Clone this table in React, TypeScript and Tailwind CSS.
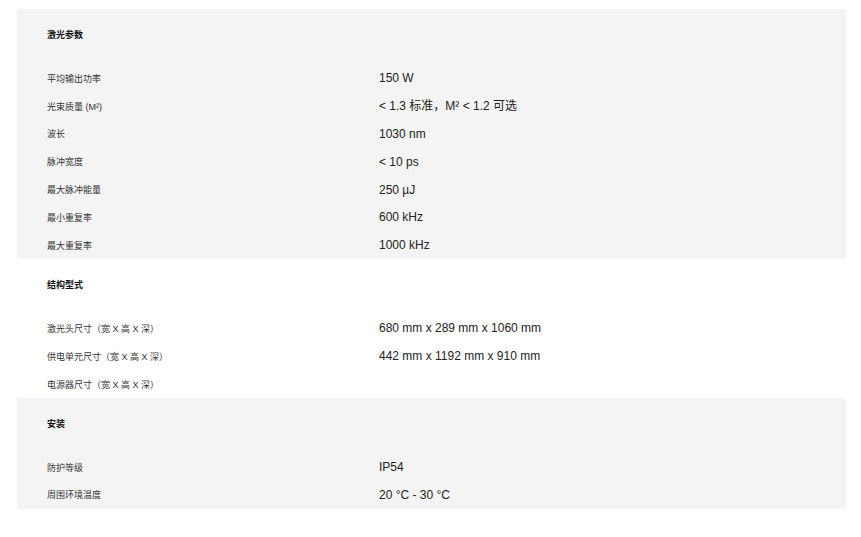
import React from "react";

type Section = { title: string; rows: [string, string][]; gray: boolean };

const sections: Section[] = [
  {
    title: "激光参数",
    gray: true,
    rows: [
      ["平均输出功率", "150 W"],
      ["光束质量 (M²)", "< 1.3 标准，M² < 1.2 可选"],
      ["波长", "1030 nm"],
      ["脉冲宽度", "< 10 ps"],
      ["最大脉冲能量", "250 µJ"],
      ["最小重复率", "600 kHz"],
      ["最大重复率", "1000 kHz"],
    ],
  },
  {
    title: "结构型式",
    gray: false,
    rows: [
      ["激光头尺寸（宽 X 高 X 深）", "680 mm x 289 mm x 1060 mm"],
      ["供电单元尺寸（宽 X 高 X 深）", "442 mm x 1192 mm x 910 mm"],
      ["电源器尺寸（宽 X 高 X 深）", ""],
    ],
  },
  {
    title: "安装",
    gray: true,
    rows: [
      ["防护等级", "IP54"],
      ["周围环境温度", "20 °C - 30 °C"],
    ],
  },
];

export default function App() {
  return (
    <div
      className="w-[861px] h-[537px] bg-white pt-[9px] pl-[17px] text-[#222]"
      style={{ fontFamily: '"Liberation Sans", Arial, "Noto Sans CJK SC", sans-serif' }}
    >
      <div className="w-[829px] flex flex-col">
        {sections.map((s) => (
          <div key={s.title} className={`${s.gray ? "bg-[#f4f4f4]" : "bg-white"} px-[30px] pt-[17px]`}>
            <div className="h-[18px] leading-[18px] text-[9px] font-bold text-[#111] mb-[20px]">{s.title}</div>
            {s.rows.map(([k, v]) => (
              <div key={k} className="h-[27.9px] flex items-center">
                <div className="w-[332px] text-[9px] text-[#333] pt-[3px]">{k}</div>
                <div className="text-[12px] text-[#222]">{v}</div>
              </div>
            ))}
          </div>
        ))}
      </div>
    </div>
  );
}
